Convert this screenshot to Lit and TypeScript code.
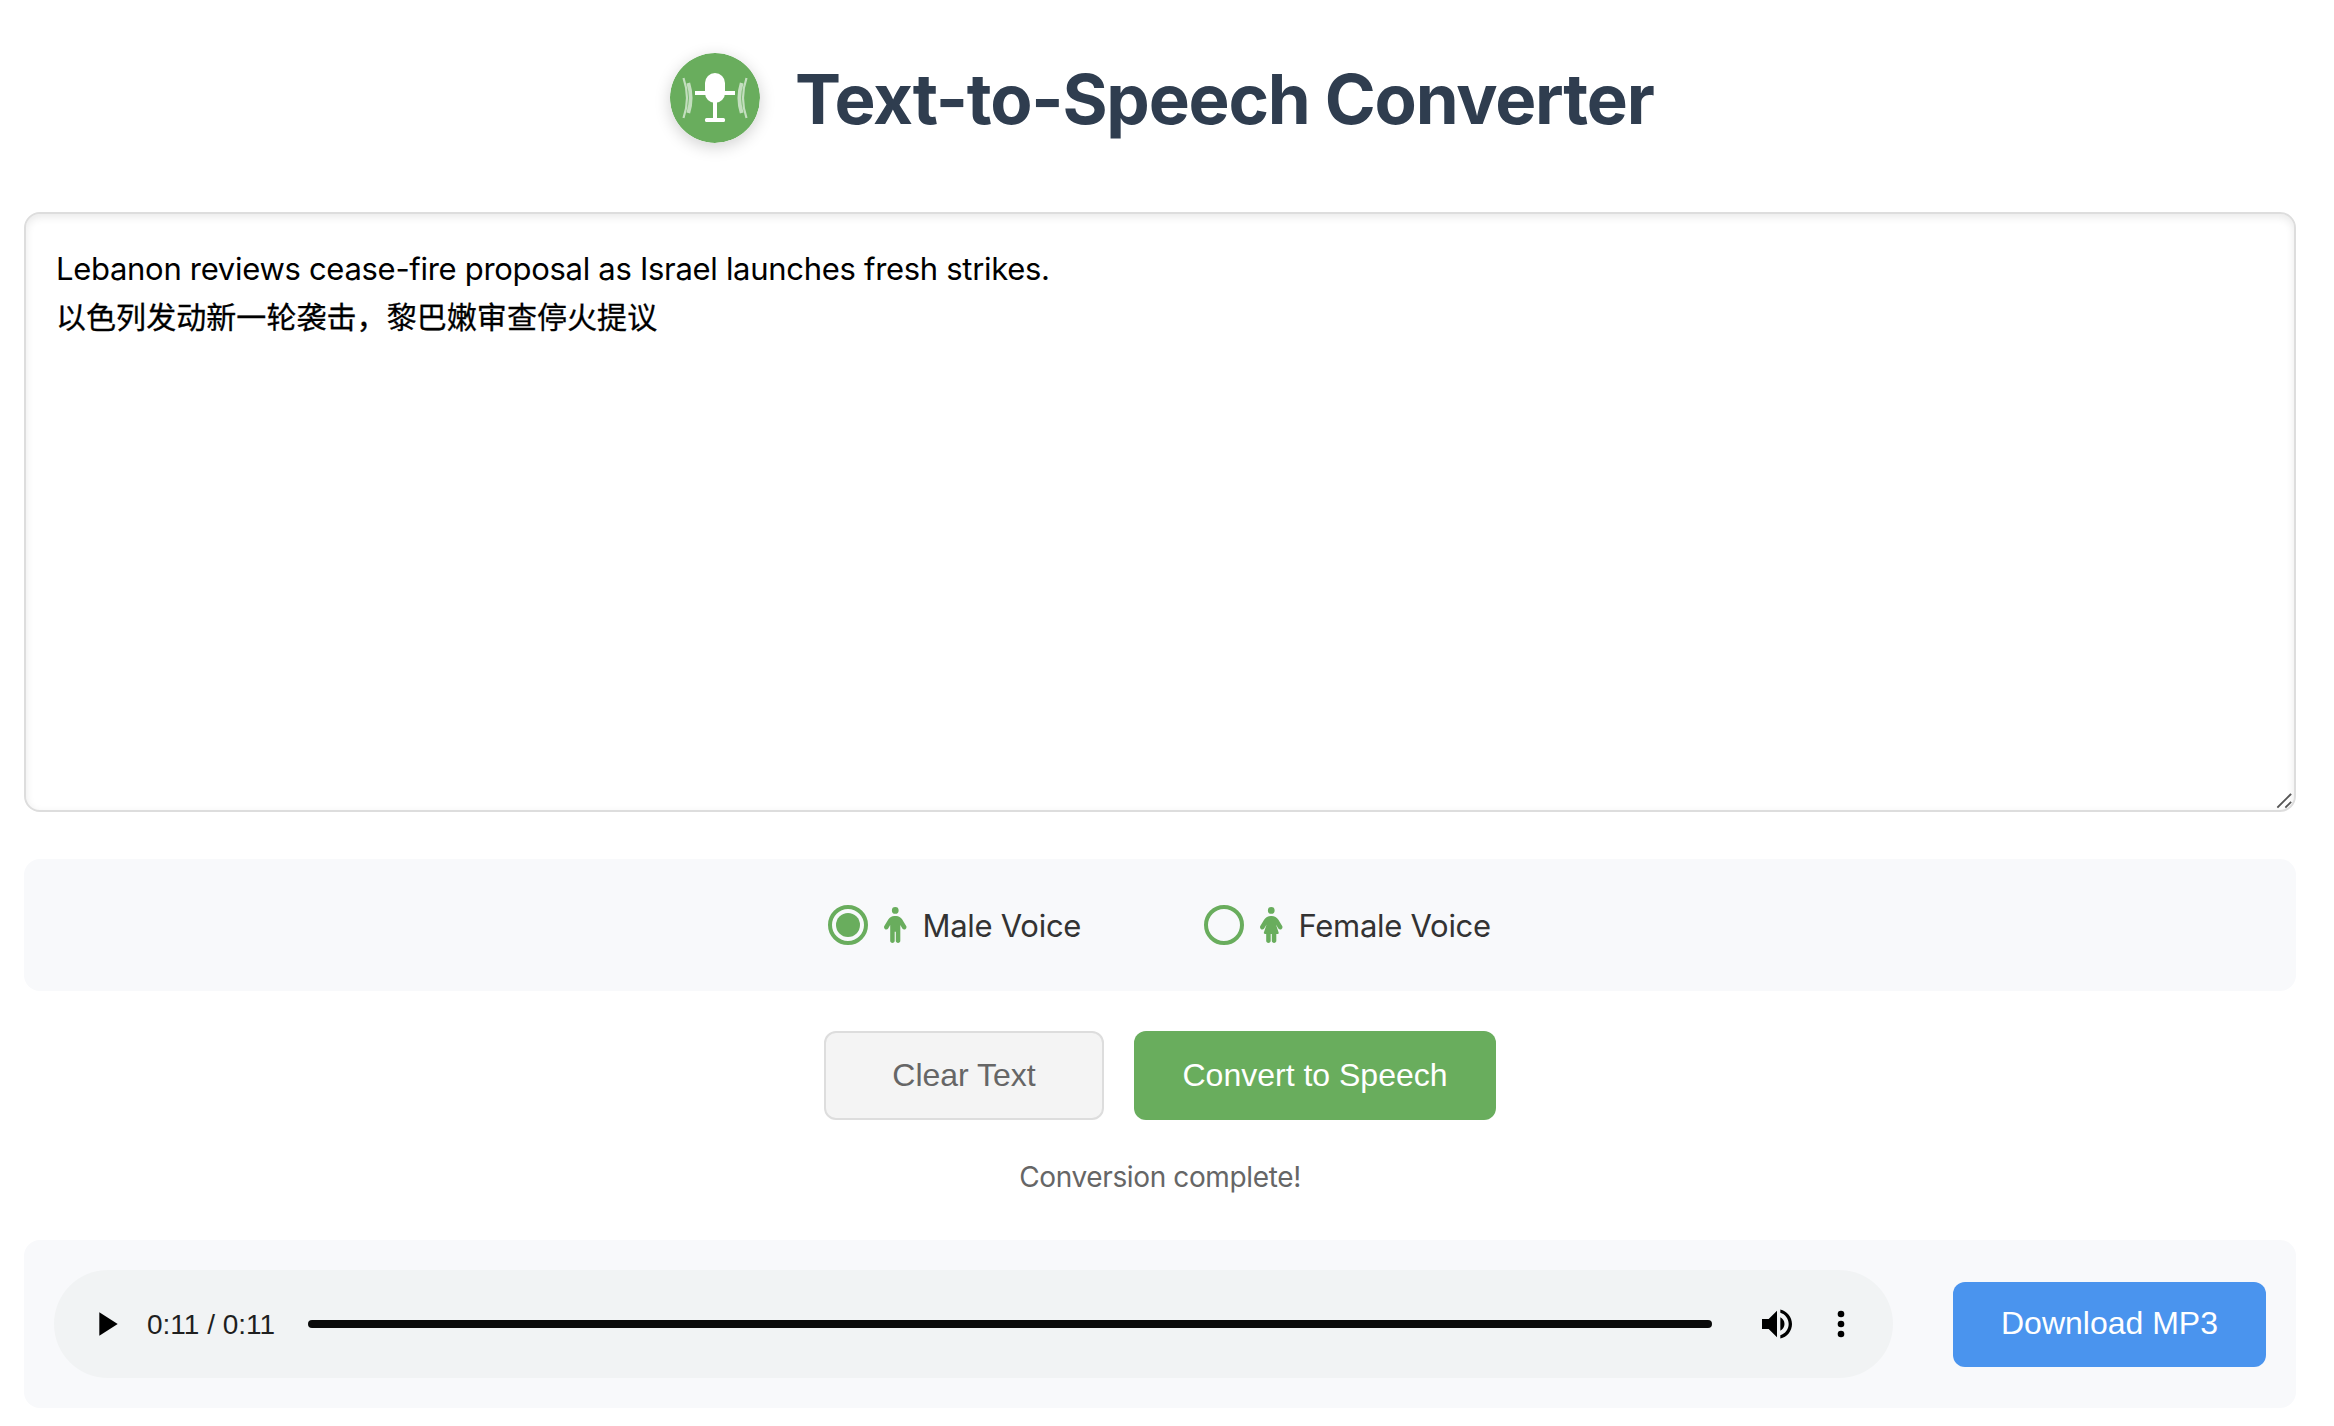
import { LitElement, html, css, svg } from "lit";
import { customElement, property, state } from "lit/decorators.js";

const ICONS = {
  person: svg`<path d="M112 48a48 48 0 1 1 96 0 48 48 0 1 1 -96 0zm40 304V480c0 17.700-14.300 32-32 32s-32-14.300-32-32V256.900L59.400 304.500c-9.100 15.100-28.800 20-43.900 10.900s-20-28.800-10.900-43.900l58.300-97c17.400-28.900 48.600-46.600 82.300-46.600h29.700c33.700 0 64.900 17.700 82.300 46.600l58.300 97c9.100 15.100 4.200 34.800-10.900 43.900s-34.800 4.200-43.900-10.900L232 256.900V480c0 17.700-14.300 32-32 32s-32-14.300-32-32V352H152z"/>`,
  personDress: svg`<path d="M160 0a48 48 0 1 1 0 96 48 48 0 1 1 0-96zM88 384H70.200c-10.900 0-18.600-10.700-15.200-21.100L93.300 248.100 59.400 304.500c-9.100 15.100-28.800 20-43.900 10.900s-20-28.800-10.900-43.900l53.600-89.200c20.300-33.700 56.700-54.300 96-54.300h11.600c39.300 0 75.700 20.600 96 54.300l53.600 89.200c9.100 15.100 4.200 34.800-10.900 43.900s-34.800 4.200-43.900-10.900l-33.900-56.300L265 362.900c3.500 10.400-4.300 21.100-15.200 21.100H232v96c0 17.700-14.300 32-32 32s-32-14.300-32-32V384H152v96c0 17.700-14.300 32-32 32s-32-14.300-32-32V384z"/>`,
};

type Voice = "male" | "female";

const VOICES: { id: Voice; label: string }[] = [
  { id: "male", label: "Male Voice" },
  { id: "female", label: "Female Voice" },
];

@customElement("voice-option")
export class VoiceOption extends LitElement {
  @property() voice: Voice = "male";
  @property() label = "";
  @property({ type: Boolean }) checked = false;

  static styles = css`
    :host {
      display: block;
    }
    .option {
      display: flex;
      align-items: center;
      gap: 16px;
      cursor: pointer;
    }
    .radio {
      box-sizing: border-box;
      flex: none;
      width: 40px;
      height: 40px;
      border: 4px solid #69ad5d;
      border-radius: 50%;
      display: grid;
      place-items: center;
    }
    .dot {
      width: 24px;
      height: 24px;
      border-radius: 50%;
      background: #69ad5d;
    }
    .figure {
      flex: none;
      width: 22.5px;
      height: 36px;
      fill: #69ad5d;
    }
    .label {
      font: 31px/44px Inter, "Liberation Sans", sans-serif;
      letter-spacing: -0.28px;
      color: #333;
      white-space: nowrap;
      padding-top: 1px;
    }
  `;

  render() {
    return html`
      <div class="option" role="radio" aria-checked=${this.checked}>
        <span class="radio">${this.checked ? html`<span class="dot"></span>` : null}</span>
        <svg class="figure" viewBox="0 0 320 512">
          ${this.voice === "male" ? ICONS.person : ICONS.personDress}
        </svg>
        <span class="label">${this.label}</span>
      </div>
    `;
  }
}

@customElement("audio-player")
export class AudioPlayer extends LitElement {
  static styles = css`
    :host {
      display: block;
      flex: 1;
    }
    .pill {
      box-sizing: border-box;
      height: 108px;
      padding: 0 32px;
      border-radius: 54px;
      background: #f1f3f4;
      display: flex;
      align-items: center;
    }
    .glyph {
      flex: none;
      width: 40px;
      height: 40px;
      fill: #000;
    }
    .time {
      width: 128px;
      margin: 0 33px 0 21px;
      padding-top: 2px;
      font: 28px/40px "Liberation Sans", Arial, sans-serif;
      color: #1f1f1f;
      white-space: nowrap;
      text-shadow: 0 0 16px rgba(255, 255, 255, 0.5);
    }
    .track {
      flex: 1;
      height: 8px;
      border-radius: 4px;
      background: #0a0a0a;
    }
    .volume {
      margin: 0 24px 0 45px;
    }
  `;

  render() {
    return html`
      <div class="pill">
        <svg class="glyph" viewBox="0 0 24 24"><path d="M8 5v14l11-7z" /></svg>
        <span class="time">0:11 / 0:11</span>
        <div class="track"></div>
        <svg class="glyph volume" viewBox="0 0 24 24">
          <path
            d="M3 9v6h4l5 5V4L7 9H3zm13.500 3c0-1.770-1.020-3.290-2.500-4.030v8.050c1.480-.730 2.500-2.250 2.500-4.020zM14 3.230v2.060c2.890.860 5 3.540 5 6.710s-2.110 5.850-5 6.710v2.060c4.010-.910 7-4.490 7-8.770s-2.990-7.860-7-8.770z"
          />
        </svg>
        <svg class="glyph" viewBox="0 0 24 24">
          <circle cx="12" cy="6" r="2" />
          <circle cx="12" cy="12" r="2" />
          <circle cx="12" cy="18" r="2" />
        </svg>
      </div>
    `;
  }
}

@customElement("app-root")
export class AppRoot extends LitElement {
  @state() private voice: Voice = "male";

  static styles = css`
    :host {
      display: block;
      box-sizing: border-box;
      width: 2320px;
      min-height: 1426px;
      padding: 53px 24px 18px;
      background: #fff;
      font-family: Inter, "Liberation Sans", "Noto Sans CJK SC", sans-serif;
    }
    .header {
      display: flex;
      justify-content: center;
      align-items: center;
      gap: 35px;
      height: 90px;
    }
    .logo {
      flex: none;
      width: 90px;
      height: 90px;
      border-radius: 50%;
      box-shadow: 0 4px 16px rgba(0, 0, 0, 0.18);
    }
    .title {
      width: 855px;
      margin: 2px 0 0;
      font-weight: 700;
      font-size: 69px;
      line-height: 84px;
      letter-spacing: -1.2px;
      color: #2f3d4f;
      white-space: nowrap;
    }
    .editor {
      box-sizing: border-box;
      position: relative;
      height: 600px;
      margin-top: 69px;
      padding: 31px 30px;
      border: 2px solid #ddd;
      border-radius: 16px;
      background: #fff;
      box-shadow: inset 0 3px 8px rgba(0, 0, 0, 0.09);
      color: #000;
    }
    .line-en {
      font-size: 31px;
      line-height: 48px;
      letter-spacing: -0.3px;
    }
    .line-zh {
      font-family: "Noto Sans CJK SC", sans-serif;
      font-size: 30px;
      line-height: 45px;
      letter-spacing: 0.06px;
      -webkit-text-stroke: 0.3px #000;
    }
    .grip {
      position: absolute;
      right: 1px;
      bottom: 0;
      width: 18px;
      height: 18px;
      stroke: #555;
      stroke-width: 1.8;
      stroke-linecap: square;
    }
    .panel {
      box-sizing: border-box;
      border-radius: 16px;
      background: #f8f9fb;
      display: flex;
      align-items: center;
    }
    .voices {
      height: 132px;
      margin-top: 47px;
      justify-content: center;
      gap: 120px;
    }
    .male {
      width: 256px;
    }
    .female {
      width: 288px;
    }
    .actions {
      display: flex;
      justify-content: center;
      gap: 30px;
      margin-top: 40px;
    }
    .button {
      box-sizing: border-box;
      margin: 0;
      padding: 0 0 2px;
      border: 0;
      border-radius: 12px;
      font: 32px/40px "Liberation Sans", Arial, sans-serif;
      color: #fff;
      white-space: nowrap;
    }
    .clear {
      width: 280px;
      height: 89px;
      border: 2px solid #ddd;
      background: #f4f4f4;
      color: #666;
    }
    .convert {
      width: 362px;
      height: 89px;
      background: #69ad5d;
    }
    .download {
      width: 313px;
      height: 85px;
      background: #4a94ee;
    }
    .status {
      margin: 35px 0 41px;
      font-size: 28px;
      line-height: 44px;
      letter-spacing: -0.37px;
      text-align: center;
      color: #666;
    }
    .audio {
      height: 168px;
      padding: 0 30px;
      gap: 60px;
    }
  `;

  render() {
    return html`
      <header class="header">
        <svg class="logo" viewBox="0 0 90 90">
          <circle cx="45" cy="45" r="45" fill="#69ad5d" />
          <g fill="#fff">
            <rect x="35" y="20" width="20" height="30" rx="10" />
            <rect x="25" y="38" width="40" height="4" />
            <rect x="43" y="48" width="4" height="19" />
            <rect x="35" y="65" width="20" height="4" rx="1.5" />
          </g>
          <g fill="none" stroke="#fff" stroke-opacity="0.6">
            <path d="M13.500 25Q20.500 45 13.500 65M76.500 25Q69.500 45 76.500 65" stroke-width="2.2" />
            <path d="M18.300 30Q23 45 18.300 60M71.700 30Q67 45 71.700 60" stroke-width="3.8" />
          </g>
        </svg>
        <h1 class="title">Text-to-Speech Converter</h1>
      </header>

      <div class="editor" role="textbox" aria-multiline="true">
        <div class="line-en">Lebanon reviews cease-fire proposal as Israel launches fresh strikes.</div>
        <div class="line-zh" lang="zh-CN">以色列发动新一轮袭击，黎巴嫩审查停火提议</div>
        <svg class="grip" viewBox="0 0 18 18"><path d="M3 15L15.500 2.500M11 15L15.500 10.500" /></svg>
      </div>

      <div class="panel voices" role="radiogroup">
        ${VOICES.map(
          (v) => html`<voice-option
            class=${v.id}
            .voice=${v.id}
            .label=${v.label}
            .checked=${this.voice === v.id}
            @click=${() => (this.voice = v.id)}
          ></voice-option>`
        )}
      </div>

      <div class="actions">
        <button class="button clear">Clear Text</button>
        <button class="button convert">Convert to Speech</button>
      </div>

      <div class="status">Conversion complete!</div>

      <div class="panel audio">
        <audio-player></audio-player>
        <button class="button download">Download MP3</button>
      </div>
    `;
  }
}
